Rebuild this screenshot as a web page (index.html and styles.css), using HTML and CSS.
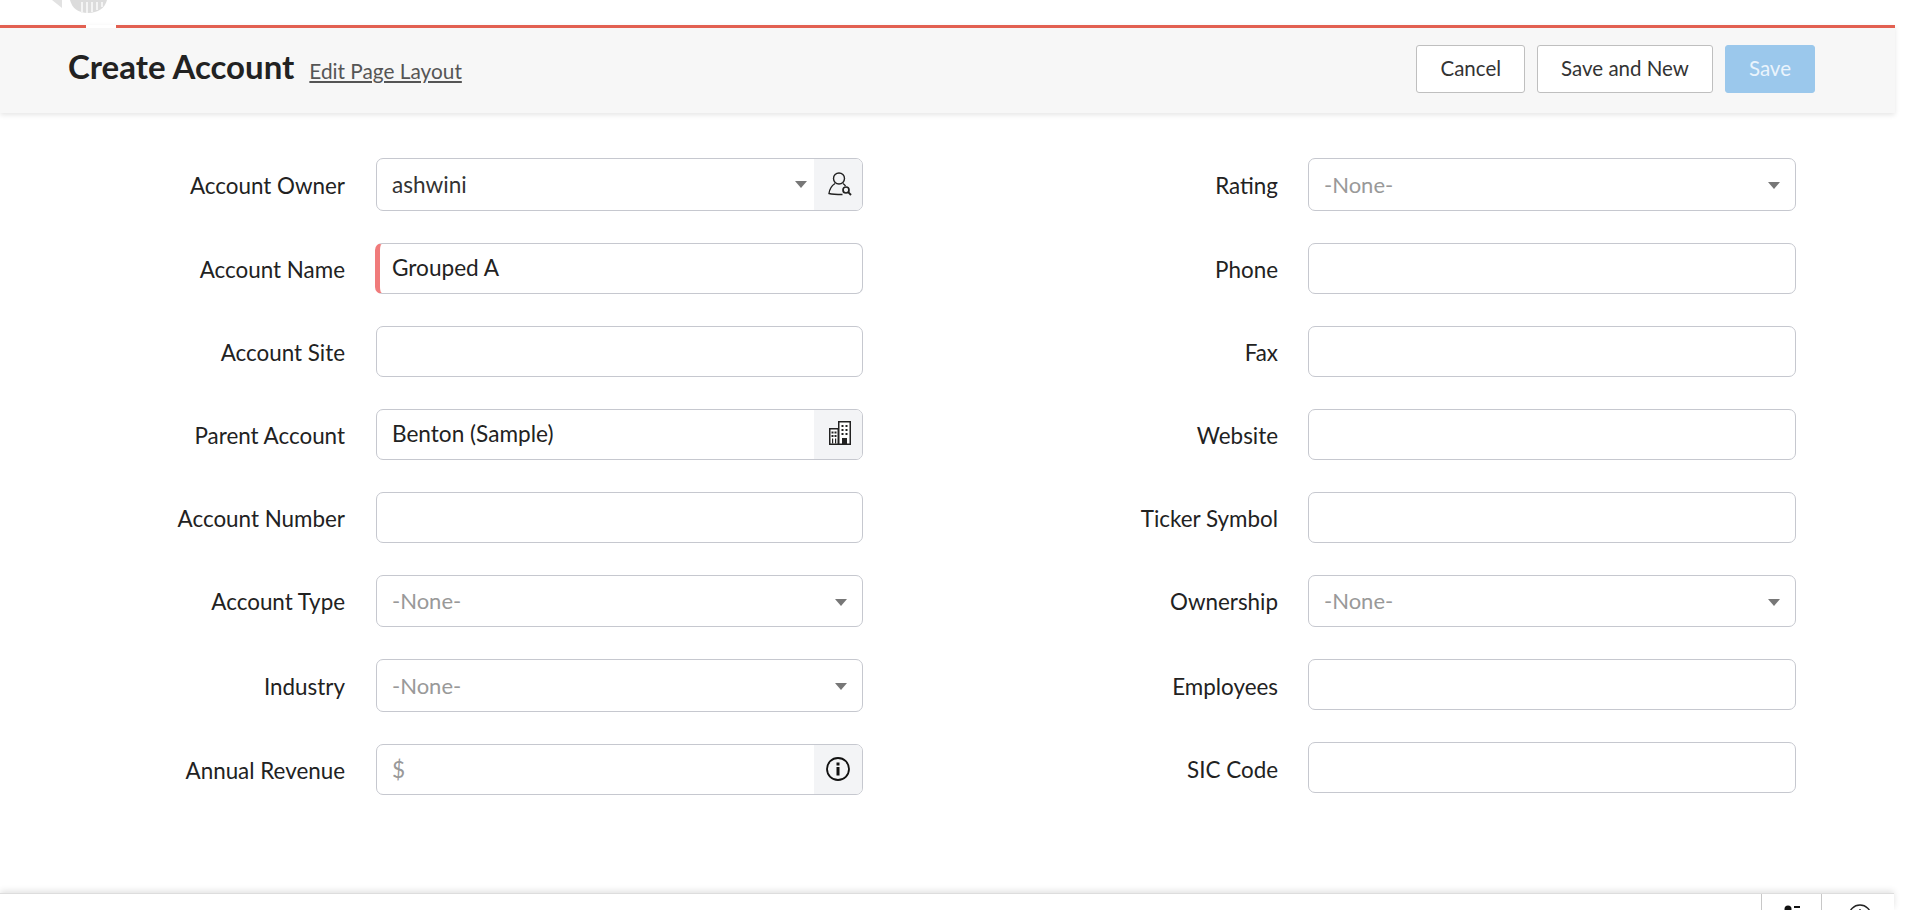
FILE: index.html
```html
<!DOCTYPE html>
<html>
<head lang="en">
<meta charset="UTF-8">
<title>Create Account</title>
<link rel="stylesheet" href="styles.css">
</head>
<body>
<div class="top">
    <svg class="logo" width="70" height="14" viewBox="0 0 70 14">
        <path d="M2 0L12 0L12 8Z" fill="#e2e2e2"/>
        <path d="M20 0H57C55 8 48 13 38 13C28 13 22 8 20 0Z" fill="#dcdcdc"/>
        <path d="M31 2h2v11h-2zM36 2h2v11h-2zM41 2h2v10h-2zM46 2h2v8h-2zM51 2h2v5h-2z" fill="#f4f4f4"/>
    </svg>
</div>
<div class="head">
    <span class="notch"></span>
    <div class="head-left">
        <h1>Create Account</h1>
        <a href="javascript:;">Edit Page Layout</a>
    </div>
    <div class="head-btns">
        <button class="btn">Cancel</button>
        <button class="btn">Save and New</button>
        <button class="btn btn-save">Save</button>
    </div>
</div>
<div class="form">
    <div class="col col-left">
        <div class="row">
            <label>Account Owner</label>
            <div class="field sel">
                <span class="val val-dark">ashwini</span>
                <i class="caret caret-in"></i>
                <span class="addon">
                    <svg class="ico" width="24" height="24" viewBox="0 0 24 24" fill="none" stroke="#222" stroke-width="1.4">
                        <circle cx="11" cy="6.500" r="5.500"/>
                        <path d="M7 11.500C4 13.500 1.500 17 1 21.500C5 22.500 10 22.500 14.500 22.500"/>
                        <path d="M15 11.500C16 12.200 17 13 17.500 14"/>
                        <circle cx="18" cy="18" r="3" stroke-width="1.700"/>
                        <path d="M20.200 20.200L23 23" stroke-width="1.900"/>
                    </svg>
                </span>
            </div>
        </div>
        <div class="row">
            <label>Account Name</label>
            <div class="field req"><input type="text" value="Grouped A"></div>
        </div>
        <div class="row">
            <label>Account Site</label>
            <div class="field"><input type="text"></div>
        </div>
        <div class="row">
            <label>Parent Account</label>
            <div class="field">
                <input type="text" value="Benton (Sample)">
                <span class="addon">
                    <svg class="ico ico-up" width="22" height="24" viewBox="0 0 22 24">
                        <path d="M9 0h13v24H9z" fill="#222"/>
                        <path d="M10.500 1.500h10v21h-10z" fill="#fff"/>
                        <path d="M0 7h10v17H0z" fill="#222"/>
                        <path d="M1.500 8.500h7v14h-7z" fill="#fff"/>
                        <path d="M12.500 4h2v2h-2zM16.500 4h2v2h-2zM12.500 8h2v2h-2zM16.500 8h2v2h-2zM12.500 12h2v2h-2zM16.500 12h2v2h-2zM13 17h5v7h-5z" fill="#222"/>
                        <path d="M2.500 10.500h2v2h-2zM5.500 10.500h2v2h-2zM2.500 14h2v2h-2zM5.500 14h2v2h-2zM3 17.500h1.200v5H3zM6 17.500h1.200v5H6z" fill="#222"/>
                    </svg>
                </span>
            </div>
        </div>
        <div class="row">
            <label>Account Number</label>
            <div class="field"><input type="text"></div>
        </div>
        <div class="row">
            <label>Account Type</label>
            <div class="field sel"><span class="val">-None-</span><i class="caret"></i></div>
        </div>
        <div class="row">
            <label>Industry</label>
            <div class="field sel"><span class="val">-None-</span><i class="caret"></i></div>
        </div>
        <div class="row">
            <label>Annual Revenue</label>
            <div class="field">
                <input class="money" type="text" placeholder="$">
                <span class="addon">
                    <svg width="26" height="26" viewBox="0 0 26 26">
                        <circle cx="13" cy="13" r="11" fill="none" stroke="#111" stroke-width="1.800"/>
                        <path d="M11.500 6.500h3v3h-3zM11.500 11h3v8.500h-3z" fill="#111"/>
                    </svg>
                </span>
            </div>
        </div>
    </div>
    <div class="col col-right">
        <div class="row">
            <label>Rating</label>
            <div class="field sel"><span class="val">-None-</span><i class="caret"></i></div>
        </div>
        <div class="row">
            <label>Phone</label>
            <div class="field"><input type="text"></div>
        </div>
        <div class="row">
            <label>Fax</label>
            <div class="field"><input type="text"></div>
        </div>
        <div class="row">
            <label>Website</label>
            <div class="field"><input type="text"></div>
        </div>
        <div class="row">
            <label>Ticker Symbol</label>
            <div class="field"><input type="text"></div>
        </div>
        <div class="row">
            <label>Ownership</label>
            <div class="field sel"><span class="val">-None-</span><i class="caret"></i></div>
        </div>
        <div class="row">
            <label>Employees</label>
            <div class="field"><input type="text"></div>
        </div>
        <div class="row">
            <label>SIC Code</label>
            <div class="field"><input type="text"></div>
        </div>
    </div>
</div>
<div class="foot">
    <div class="foot-cell foot-a">
        <svg width="24" height="24" viewBox="0 0 24 24" fill="#111">
            <circle cx="8" cy="6" r="3.500"/>
            <path d="M2 15c0-4 3-6 6-6s6 2 6 6z"/>
            <path d="M14 3h6v2h-6zM14 7h4v2h-4z"/>
        </svg>
    </div>
    <div class="foot-cell foot-b">
        <svg width="26" height="26" viewBox="0 0 26 26" fill="none" stroke="#222" stroke-width="1.300">
            <circle cx="13" cy="13" r="11"/>
            <path d="M13 6v7h5"/>
        </svg>
    </div>
</div>
</body>
</html>
```

FILE: styles.css
```css
*{margin:0;padding:0;box-sizing:border-box;}
html,body{height:100%;}
body{
	width:1920px;
	height:910px;
	overflow:hidden;
	background:#fff;
	font-family:Lato,"Liberation Sans",sans-serif;
	color:#222;
	display:flex;
	flex-direction:column;
}
.top{height:25px;padding-left:50px;flex:none;}
.logo{display:block;}

/* page header */
.head{
	position:relative;
	flex:none;
	width:1895px;
	height:88px;
	border-top:3px solid #e26051;
	background:#f7f7f7;
	box-shadow:0 2px 5px rgba(0,0,0,.1);
	padding:17px 80px 0 68px;
	display:flex;
	justify-content:space-between;
}
.notch{
	position:absolute;
	left:86px;
	top:-3px;
	width:30px;
	height:3px;
	background:#fff;
}
.head-left{display:flex;align-items:baseline;height:48px;margin-top:-3px;}
.head-left h1{font-size:33px;font-weight:700;color:#222;line-height:48px;}
.head-left a{font-size:20.800px;color:#555;text-decoration:underline;margin-left:15px;}
.head-btns{display:flex;gap:12px;}
.btn{
	height:48px;
	padding:0 23px 2px;
	background:#fff;
	border:1px solid #bfbfbf;
	border-radius:3px;
	font-family:inherit;
	font-size:20.500px;
	color:#333;
}
.btn-save{background:#9bc8ec;border-color:#9bc8ec;color:#eaf4fc;}

/* form */
.form{display:flex;padding-top:45px;flex:none;}
.col{display:flex;flex-direction:column;gap:32px;}
.col-left{width:863px;}
.col-right{width:933px;}
.row{display:flex;align-items:center;}
.row label{
	flex:1;
	text-align:right;
	font-size:22.400px;
	color:#222;
	padding-top:2px;
}
.row:has(input) label{padding-top:3px;}
.col-left label{padding-right:31px;}
.col-right label{padding-right:30px;}
.field{
	flex:none;
	width:487px;
	height:51px;
	border:1px solid #c6c8cf;
	border-radius:7px;
	background:#fff;
	display:flex;
	align-items:center;
	overflow:hidden;
}
.col-right .field{width:488px;}
.sel{height:52.600px;}
.req{
	width:488px;
	margin-left:-1px;
	border-left:5px solid #f07b7b;
}
.field input{
	flex:1;
	min-width:0;
	height:100%;
	border:0;
	outline:0;
	padding:0 0 2px 15px;
	background:transparent;
	font-family:inherit;
	font-size:22.600px;
	color:#222;
}
.req input{padding-left:12px;}
.field .money{padding-bottom:0;}
.field input::placeholder{color:#999;opacity:1;}
.val{flex:1;padding-left:15px;font-size:22px;color:#999;}
.val-dark{color:#333;font-size:22.600px;}
.caret{
	flex:none;
	width:0;
	height:0;
	border-left:6px solid transparent;
	border-right:6px solid transparent;
	border-top:7px solid #777;
	margin:3px 15px 0 0;
}
.caret-in{margin:0 7px 0 0;}
.addon{
	flex:none;
	width:48px;
	height:100%;
	background:#f3f4f6;
	display:flex;
	align-items:center;
	justify-content:center;
}
.ico{margin-left:3px;}
.ico-up{margin-bottom:3px;}

/* bottom bar, runs off the window */
.foot{
	flex:none;
	margin-top:auto;
	width:1894px;
	height:17px;
	background:#fff;
	border-top:1px solid #ddd;
	box-shadow:0 -2px 6px rgba(0,0,0,.12);
	display:flex;
	justify-content:flex-end;
	overflow:hidden;
}
.foot-cell{
	height:50px;
	border-left:1px solid #c8c8c8;
	display:flex;
	justify-content:center;
	padding-top:9px;
}
.foot-a{width:60px;}
.foot-b{width:73px;padding-left:4px;}
```
